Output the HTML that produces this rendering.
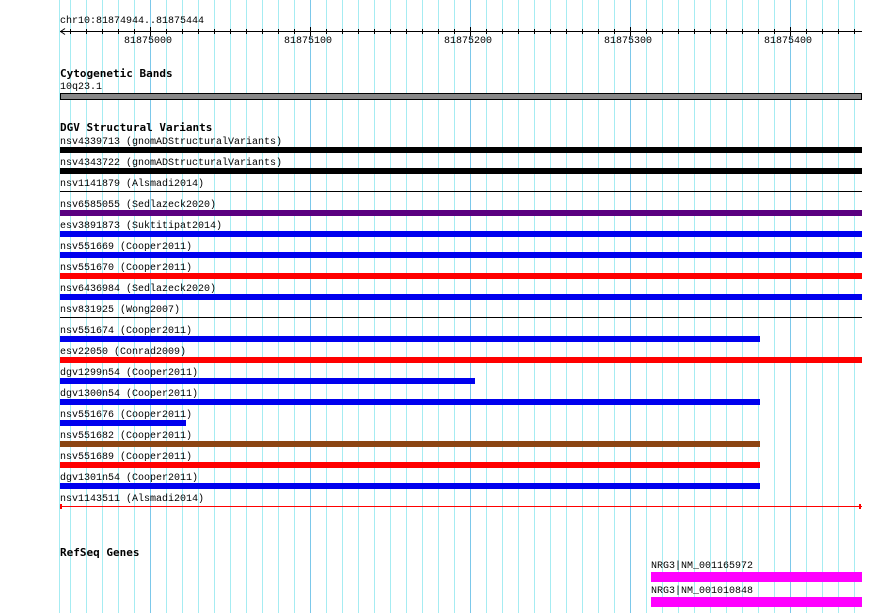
<!DOCTYPE html>
<html><head><style>
body{margin:0;width:890px;height:613px;overflow:hidden;background:#fff;position:relative;font-family:"Liberation Mono",monospace;font-size:10px;color:#000}
.g{position:absolute;top:0;width:1px;height:613px;background:#a6ecf2}
.major{position:absolute;top:0;width:1px;height:613px;background:#7cc8ea}
.t{position:absolute;left:60px;white-space:pre;line-height:10px}
.b{font-family:"DejaVu Sans Mono","Liberation Mono",monospace;font-weight:bold;font-size:11px}
.bar{position:absolute;left:60px;height:6px}
.ln{position:absolute;left:60px;height:1px;width:802px;background:#000}
</style></head><body>
<div class="g" style="left:59px"></div>
<div class="g" style="left:70px"></div><div class="g" style="left:86px"></div><div class="g" style="left:102px"></div><div class="g" style="left:118px"></div><div class="g" style="left:134px"></div>
<div class="g" style="left:166px"></div><div class="g" style="left:182px"></div><div class="g" style="left:198px"></div><div class="g" style="left:214px"></div><div class="g" style="left:230px"></div><div class="g" style="left:246px"></div><div class="g" style="left:262px"></div><div class="g" style="left:278px"></div><div class="g" style="left:294px"></div>
<div class="g" style="left:326px"></div><div class="g" style="left:342px"></div><div class="g" style="left:358px"></div><div class="g" style="left:374px"></div><div class="g" style="left:390px"></div><div class="g" style="left:406px"></div><div class="g" style="left:422px"></div><div class="g" style="left:438px"></div><div class="g" style="left:454px"></div>
<div class="g" style="left:486px"></div><div class="g" style="left:502px"></div><div class="g" style="left:518px"></div><div class="g" style="left:534px"></div><div class="g" style="left:550px"></div><div class="g" style="left:566px"></div><div class="g" style="left:582px"></div><div class="g" style="left:598px"></div><div class="g" style="left:614px"></div>
<div class="g" style="left:646px"></div><div class="g" style="left:662px"></div><div class="g" style="left:678px"></div><div class="g" style="left:694px"></div><div class="g" style="left:710px"></div><div class="g" style="left:726px"></div><div class="g" style="left:742px"></div><div class="g" style="left:758px"></div><div class="g" style="left:774px"></div>
<div class="g" style="left:806px"></div><div class="g" style="left:822px"></div><div class="g" style="left:838px"></div><div class="g" style="left:854px"></div>
<div class="major" style="left:150px"></div><div class="major" style="left:310px"></div><div class="major" style="left:470px"></div><div class="major" style="left:630px"></div><div class="major" style="left:790px"></div>
<div class="t" style="top:17px">chr10:81874944..81875444</div>
<div style="position:absolute;left:60px;top:31px;width:802px;height:1px;background:#000"></div>
<svg style="position:absolute;left:58px;top:26px" width="808" height="12">
<path d="M2.5 5.5 L7 2.5 M2.5 5.5 L7 8.5" stroke="#000" fill="none"/>
<g stroke="#000">
<path d="M12.5 3V8M28.5 3V8M44.5 3V8M60.5 3V8M76.5 3V8M92.5 1V10M108.5 3V8M124.5 3V8M140.5 3V8M156.5 3V8M172.5 3V8M188.5 3V8M204.5 3V8M220.5 3V8M236.5 3V8M252.5 1V10M268.5 3V8M284.5 3V8M300.5 3V8M316.5 3V8M332.5 3V8M348.5 3V8M364.5 3V8M380.5 3V8M396.5 3V8M412.5 1V10M428.5 3V8M444.5 3V8M460.5 3V8M476.5 3V8M492.5 3V8M508.5 3V8M524.5 3V8M540.5 3V8M556.5 3V8M572.5 1V10M588.5 3V8M604.5 3V8M620.5 3V8M636.5 3V8M652.5 3V8M668.5 3V8M684.5 3V8M700.5 3V8M716.5 3V8M732.5 1V10M748.5 3V8M764.5 3V8M780.5 3V8M796.5 3V8"/>
</g></svg>
<div class="t" style="top:37px;left:124px">81875000</div>
<div class="t" style="top:37px;left:284px">81875100</div>
<div class="t" style="top:37px;left:444px">81875200</div>
<div class="t" style="top:37px;left:604px">81875300</div>
<div class="t" style="top:37px;left:764px">81875400</div>
<div class="t b" style="top:69px">Cytogenetic Bands</div>
<div class="t" style="top:83px">10q23.1</div>
<div style="position:absolute;left:60px;top:93px;width:800px;height:5px;background:#888;border:1px solid #000"></div>
<div class="t b" style="top:123px">DGV Structural Variants</div>
<div class="t" style="top:138px">nsv4339713 (gnomADStructuralVariants)</div>
<div class="bar" style="top:147px;width:802px;background:#000"></div>
<div class="t" style="top:159px">nsv4343722 (gnomADStructuralVariants)</div>
<div class="bar" style="top:168px;width:802px;background:#000"></div>
<div class="t" style="top:180px">nsv1141879 (Alsmadi2014)</div>
<div class="ln" style="top:191px"></div>
<div class="t" style="top:201px">nsv6585055 (Sedlazeck2020)</div>
<div class="bar" style="top:210px;width:802px;background:#5a0080"></div>
<div class="t" style="top:222px">esv3891873 (Suktitipat2014)</div>
<div class="bar" style="top:231px;width:802px;background:#0000ee"></div>
<div class="t" style="top:243px">nsv551669 (Cooper2011)</div>
<div class="bar" style="top:252px;width:802px;background:#0000ee"></div>
<div class="t" style="top:264px">nsv551670 (Cooper2011)</div>
<div class="bar" style="top:273px;width:802px;background:#f00"></div>
<div class="t" style="top:285px">nsv6436984 (Sedlazeck2020)</div>
<div class="bar" style="top:294px;width:802px;background:#0000ee"></div>
<div class="t" style="top:306px">nsv831925 (Wong2007)</div>
<div class="ln" style="top:317px"></div>
<div class="t" style="top:327px">nsv551674 (Cooper2011)</div>
<div class="bar" style="top:336px;width:700px;background:#0000ee"></div>
<div class="t" style="top:348px">esv22050 (Conrad2009)</div>
<div class="bar" style="top:357px;width:802px;background:#f00"></div>
<div class="t" style="top:369px">dgv1299n54 (Cooper2011)</div>
<div class="bar" style="top:378px;width:415px;background:#0000ee"></div>
<div class="t" style="top:390px">dgv1300n54 (Cooper2011)</div>
<div class="bar" style="top:399px;width:700px;background:#0000ee"></div>
<div class="t" style="top:411px">nsv551676 (Cooper2011)</div>
<div class="bar" style="top:420px;width:126px;background:#0000ee"></div>
<div class="t" style="top:432px">nsv551682 (Cooper2011)</div>
<div class="bar" style="top:441px;width:700px;background:#8b4513"></div>
<div class="t" style="top:453px">nsv551689 (Cooper2011)</div>
<div class="bar" style="top:462px;width:700px;background:#f00"></div>
<div class="t" style="top:474px">dgv1301n54 (Cooper2011)</div>
<div class="bar" style="top:483px;width:700px;background:#0000ee"></div>
<div class="t" style="top:495px">nsv1143511 (Alsmadi2014)</div>
<div class="ln" style="top:506px;background:#f00"></div>
<div style="position:absolute;left:60px;top:504px;width:2px;height:5px;background:#f00"></div>
<div style="position:absolute;left:859px;top:504px;width:2px;height:5px;background:#f00"></div>
<div class="t b" style="top:548px">RefSeq Genes</div>
<div class="t" style="top:562px;left:651px">NRG3|NM_001165972</div>
<div style="position:absolute;left:651px;top:572px;width:211px;height:10px;background:#f0f"></div>
<div class="t" style="top:587px;left:651px">NRG3|NM_001010848</div>
<div style="position:absolute;left:651px;top:597px;width:211px;height:10px;background:#f0f"></div>
</body></html>
